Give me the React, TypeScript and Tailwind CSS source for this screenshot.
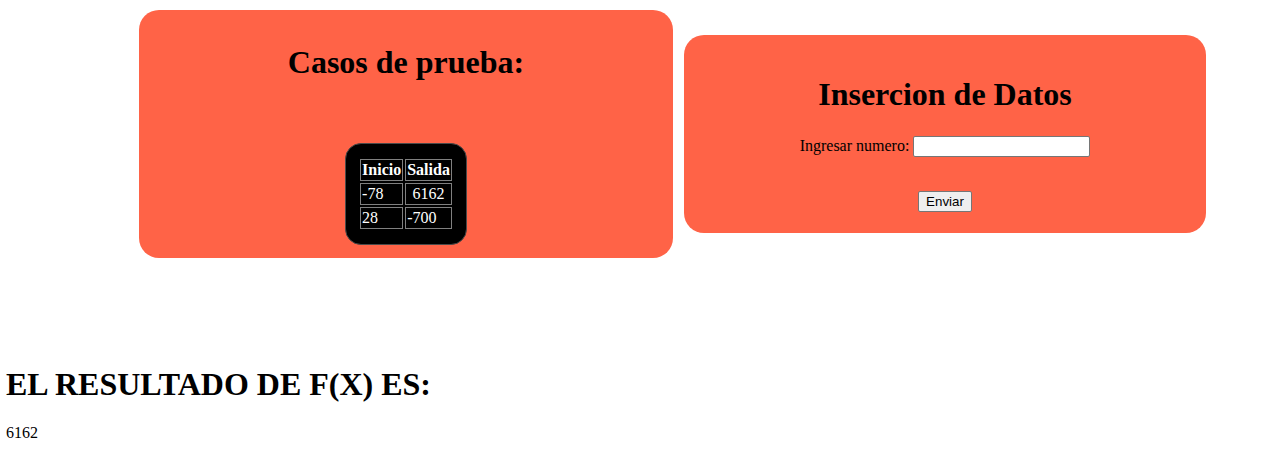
export default function App() {
  const rows = [
    ['-78', '6162'],
    ['28', '-700'],
  ];
  return (
    <div className="min-h-screen bg-white text-black font-['Liberation_Serif','Times_New_Roman',serif]">
      <div className="flex items-center gap-[11px] pl-[139px] pt-[10px]">
        {/* Casos de prueba */}
        <div className="w-[534px] rounded-[20px] bg-[#ff6347] pt-[34px] pb-[13px] flex flex-col items-center">
          <h1 className="text-[32px] font-bold leading-[36.8px]">Casos de prueba:</h1>
          <div className="mt-[62px] rounded-[16px] border border-[#4a4a4a] bg-black px-[12px] py-[13px]">
            <table className="border-separate border-spacing-[2px] text-white text-[16px] leading-[18px]">
              <thead>
                <tr>
                  <th className="border border-[#808080] p-[1px] font-bold">Inicio</th>
                  <th className="border border-[#808080] p-[1px] font-bold">Salida</th>
                </tr>
              </thead>
              <tbody>
                {rows.map(([a, b]) => (
                  <tr key={a}>
                    <td className="border border-[#808080] p-[1px] text-left">{a}</td>
                    <td className={b === '6162' ? 'border border-[#808080] p-[1px] text-center' : 'border border-[#808080] p-[1px] text-left'}>{b}</td>
                  </tr>
                ))}
              </tbody>
            </table>
          </div>
        </div>

        {/* Insercion de datos */}
        <div className="w-[522px] rounded-[20px] bg-[#ff6347] pt-[41px] pb-[21.5px] flex flex-col items-center">
          <h1 className="text-[32px] font-bold leading-[36.8px]">Insercion de Datos</h1>
          <div className="mt-[23.5px] flex items-center gap-[4px] text-[16px] leading-[18.4px]">
            <label htmlFor="numero">Ingresar numero:</label>
            <input
              id="numero"
              type="text"
              className="h-[21px] w-[177px] rounded-[2px] border border-[#767676] bg-white px-[2px] text-[13.33px] font-['Liberation_Sans',Arial,sans-serif] outline-none"
            />
          </div>
          <button
            type="button"
            className="mt-[34px] h-[21px] rounded-[2px] border border-[#767676] bg-[#efefef] px-[7.5px] text-[13.33px] leading-[15px] font-['Liberation_Sans',Arial,sans-serif]"
          >
            Enviar
          </button>
        </div>
      </div>

      <div className="px-[6px] mt-[108px]">
        <h1 className="text-[32px] font-bold leading-[36.8px]">EL RESULTADO DE F(X) ES:</h1>
        <p className="mt-[21px] text-[16px] leading-[18.4px]">6162</p>
      </div>
    </div>
  );
}
